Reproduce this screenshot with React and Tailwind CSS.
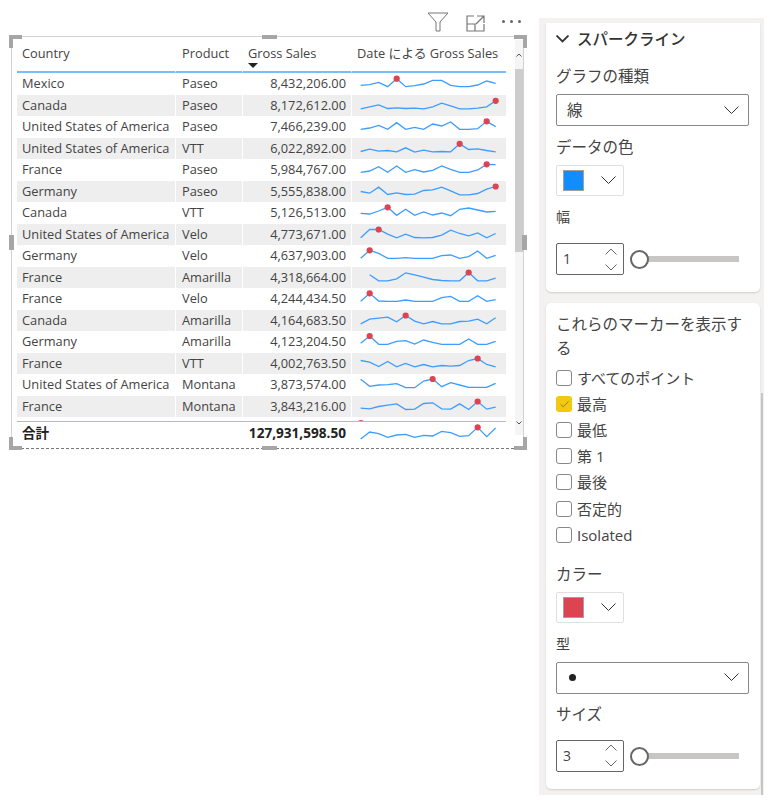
import React from 'react';
import { Check } from 'lucide-react';

// y values are read off the reference at 3x, base is the row top at the same scale
const rows = [
  ['Mexico', 'Paseo', '8,432,206.00', 219, 4, [256,254,247,260,236,260,257,252,241,241,256,260,260,255,243,250]],
  ['Canada', 'Paseo', '8,172,612.00', 283.5, 15, [325,319,313,324,322,324,323,325,319,308,316,325,325,323,319,301]],
  ['United States of America', 'Paseo', '7,466,239.00', 348, 14, [388,384,376,388,368,388,382,388,372,378,366,388,388,386,364,380]],
  ['United States of America', 'VTT', '6,022,892.00', 412.5, 11, [453,446,452,450,454,442,455,449,454,453,454,430,447,445,450,454]],
  ['France', 'Paseo', '5,984,767.00', 477, 14, [517,513,500,517,498,517,509,516,511,498,508,517,517,510,493,494]],
  ['Germany', 'Paseo', '5,555,838.00', 541.5, 15, [573,578,560,582,577,582,581,570,568,560,571,583,583,579,566,558]],
  ['Canada', 'VTT', '5,126,513.00', 606, 3, [640,642,633,622,646,628,646,636,645,639,647,628,624,630,636,634]],
  ['United States of America', 'Velo', '4,773,671.00', -4.5, 2, [37,12,12,26,37,26,36,37,36,29,14,24,31,22,37,24]],
  ['Germany', 'Velo', '4,637,903.00', 60, 1, [100,76,85,100,100,98,100,100,100,92,90,100,95,78,100,91]],
  ['France', 'Amarilla', '4,318,664.00', 124.5, 12, [null,148,166,166,160,142,148,155,162,165,166,166,141,166,166,158]],
  ['France', 'Velo', '4,244,434.50', 189, 1, [229,205,228,229,229,225,229,229,229,218,214,229,229,212,229,224]],
  ['Canada', 'Amarilla', '4,164,683.50', 253.5, 5, [295,281,278,275,289,270,287,295,288,295,295,288,287,281,295,277]],
  ['Germany', 'Amarilla', '4,123,204.50', 318, 1, [355,333,358,358,349,347,357,345,352,358,358,358,342,358,358,349]],
  ['France', 'VTT', '4,002,763.50', 382.5, 13, [405,410,423,408,424,414,424,417,424,420,422,420,405,399,417,424]],
  ['United States of America', 'Montana', '3,873,574.00', 447, 8, [463,484,480,479,476,488,488,468,462,485,473,480,487,487,487,475]],
  ['France', 'Montana', '3,843,216.00', 511.5, 13, [548,550,543,539,535,552,551,534,532,550,551,535,552,528,551,545]],
];

const totalLine = [641,620,625,636,629,627,636,630,632,618,622,633,631,606,634,608];

const markers = ['すべてのポイント', '最高', '最低', '第 1', '最後', '否定的', 'Isolated'];

const Sparkline = ({ base, peak, values }) => {
  const pts = values
    .map((v, i) => (v === null ? null : `${8.67 + i * 9},${(v - base) / 3}`))
    .filter(Boolean)
    .join(' ');
  return (
    <svg width="154" height="21" className="block overflow-visible">
      <polyline points={pts} fill="none" stroke="#3d9dff" strokeWidth="1.3" />
      <circle cx={8.67 + peak * 9} cy={(values[peak] - base) / 3} r="3.1" fill="#dc4452" />
    </svg>
  );
};

const Chevron = ({ w = 15, up = false, width = 1, color = '#333' }) => (
  <svg width={w} height={w / 2 + 1} viewBox={`0 0 ${w} ${w / 2 + 1}`} fill="none" stroke={color} strokeWidth={width} className="block">
    <path d={up ? `M.5 ${w / 2 + .5}L${w / 2} 1l${w / 2 - .5} ${w / 2 - .5}` : `M.5 .5L${w / 2} ${w / 2}l${w / 2 - .5} -${w / 2 - .5}`} />
  </svg>
);

const Handle = ({ className }) => <div className={`absolute bg-[#a6a6a6] ${className}`} />;

const Corner = ({ className, h, v }) => (
  <div className={`absolute w-[13px] h-[13px] ${className}`}>
    <div className={`absolute left-0 w-full h-[4px] bg-[#a6a6a6] ${v}`} />
    <div className={`absolute top-0 h-full w-[4px] bg-[#a6a6a6] ${h}`} />
  </div>
);

const Select = ({ children }) => (
  <div className="h-[32px] w-[193px] border border-[#8a8886] rounded-[2px] flex items-center justify-between pl-[10px] pr-[9px]">
    {children}
    <Chevron />
  </div>
);

const ColorButton = ({ swatch }) => (
  <div className="h-[31px] w-[68px] border border-[#e0e0e0] rounded-[2px] flex items-center pl-[6px] pr-[7px] justify-between">
    <div className={`w-[21px] h-[21px] border border-[#a0a0a0] ${swatch}`} />
    <Chevron />
  </div>
);

const Spinner = ({ value }) => (
  <div className="flex items-center">
    <div className="h-[32px] w-[68px] border border-[#666] rounded-[2px] flex items-center justify-between pl-[6px] pr-[6px]">
      <span className="text-[14px] text-[#444]">{value}</span>
      <div className="flex flex-col gap-[9px]">
        <Chevron w={12} up color="#666" />
        <Chevron w={12} color="#666" />
      </div>
    </div>
    <div className="relative ml-[6px] w-[109px] h-[18px] flex items-center">
      <div className="ml-[9px] w-[100px] h-[6px] bg-[#c8c6c4]" />
      <div className="absolute left-0 top-0 w-[19px] h-[19px] rounded-full border-2 border-[#666] bg-white" />
    </div>
  </div>
);

export default function App() {
  return (
    <div className="w-[770px] h-[801px] bg-white flex overflow-hidden text-[#444] [font-family:'Open_Sans','Noto_Sans_CJK_JP',sans-serif]">
      {/* visual */}
      <div className="w-[539px] shrink-0 pl-[11px]">
        <div className="h-[36px] flex items-start justify-end pr-[18px] pt-[12px] gap-[17px]">
          <svg width="22" height="20" viewBox="0 0 22 20" fill="none" stroke="#777" strokeWidth="1">
            <path d="M1 1h20l-8 9v9h-4v-9z" />
          </svg>
          <svg width="19" height="17" viewBox="0 0 19 17" fill="none" stroke="#777" strokeWidth="1.2" className="mt-[3px]">
            <path d="M8 1H1v15h17V9M1 9h8v7M11 1h7v7M18 1l-8 8" />
          </svg>
          <div className="flex gap-[5px] mt-[8px]">
            <div className="w-[3px] h-[3px] rounded-full bg-[#666]" />
            <div className="w-[3px] h-[3px] rounded-full bg-[#666]" />
            <div className="w-[3px] h-[3px] rounded-full bg-[#666]" />
          </div>
        </div>

        <div className="relative w-[513px] h-[413px] border-l border-t border-r border-[#d2d2d2] border-b border-b-[#777] [border-bottom-style:dashed] flex pl-[5px]">
          <div className="w-[489px] shrink-0 text-[12.8px]">
            <div className="grid grid-cols-[159px_67px_109px_154px] h-[36px]">
              <div className="border-b-2 border-r border-b-[#7cbcf7] border-r-white pl-[5px] pt-[7px]">Country</div>
              <div className="border-b-2 border-r border-b-[#7cbcf7] border-r-white pl-[6px] pt-[7px]">Product</div>
              <div className="relative border-b-2 border-r border-b-[#7cbcf7] border-r-white pl-[5px] pt-[7px]">
                Gross Sales
                <div className="absolute left-[5px] top-[26px] w-0 h-0 border-x-[5px] border-x-transparent border-t-[5px] border-t-[#222]" />
              </div>
              <div className="border-b-2 border-[#7cbcf7] pl-[5px] pt-[7px] whitespace-nowrap">Date による Gross Sales</div>
            </div>

            {rows.map(([country, product, sales, base, peak, values], i) => (
              <div
                key={i}
                className={`grid grid-cols-[159px_67px_109px_154px] h-[21.5px] leading-[21.5px] ${i % 2 === 1 ? 'bg-[#eeeeee]' : 'bg-white'}`}
              >
                <div className="border-r border-white pl-[5px] whitespace-nowrap">{country}</div>
                <div className="border-r border-white pl-[6px]">{product}</div>
                <div className="border-r border-white pr-[5px] text-right">{sales}</div>
                <Sparkline base={base} peak={peak} values={values} />
              </div>
            ))}

            {/* next row just showing under the total */}
            <div className="h-[3.7px] overflow-hidden pl-[335px]">
              <svg width="12" height="6" className="block">
                <circle cx="9" cy="6" r="3.1" fill="#dc4452" />
              </svg>
            </div>
            <div className="h-[1.3px] bg-[#8cc4f5]" />
            <div className="grid grid-cols-[159px_67px_109px_154px] h-[22px] leading-[21px] font-bold text-[13.6px] text-[#222]">
              <div className="pl-[5px]">合計</div>
              <div />
              <div className="pr-[6px] text-right whitespace-nowrap justify-self-end">127,931,598.50</div>
              <Sparkline base={590} peak={13} values={totalLine} />
            </div>
          </div>

          {/* scrollbar */}
          <div className="ml-[9px] mt-[3px] w-[8px] h-[395px] bg-[#f5f5f5] flex flex-col">
            <div className="h-[29px] flex items-center justify-center">
              <Chevron w={6} up color="#555" />
            </div>
            <div className="h-[183px] bg-[#cdcdcd]" />
            <div className="mt-auto h-[24px] flex items-center justify-center">
              <Chevron w={6} color="#555" />
            </div>
          </div>

          <Corner className="-left-[3px] -top-[2px]" h="left-0" v="top-0" />
          <Corner className="-right-[4px] -top-[2px]" h="right-0" v="top-0" />
          <Corner className="-left-[3px] -bottom-[2px]" h="left-0" v="bottom-0" />
          <Corner className="-right-[4px] -bottom-[2px]" h="right-0" v="bottom-0" />
          <Handle className="left-[250px] -top-[2px] w-[15px] h-[4px]" />
          <Handle className="left-[250px] -bottom-[2px] w-[15px] h-[4px]" />
          <Handle className="-left-[3px] top-[198px] w-[5px] h-[15px]" />
          <Handle className="-right-[4px] top-[198px] w-[5px] h-[15px]" />
        </div>
      </div>

      {/* format pane */}
      <div className="relative mt-[18px] w-[225px] h-[777px] bg-[#f3f2f1] pl-[7px] pt-[5px] text-[15.5px] leading-[24px]">
        <div className="w-[214px] h-[269px] bg-white rounded-b-[5px] shadow-[0_1px_2px_rgba(0,0,0,0.15)] pl-[10px]">
          <div className="flex items-center gap-[8px] pt-[4px] font-medium text-[#333]">
            <Chevron w={13} width={1.8} />
            <span>スパークライン</span>
          </div>
          <div className="mt-[13px] h-[24px]">グラフの種類</div>
          <div className="mt-[6px]">
            <Select><span>線</span></Select>
          </div>
          <div className="mt-[9px] h-[24px]">データの色</div>
          <div className="mt-[6px]"><ColorButton swatch="bg-[#118dff]" /></div>
          <div className="mt-[9px] h-[24px] text-[14px]">幅</div>
          <div className="mt-[14px]"><Spinner value="1" /></div>
        </div>

        <div className="mt-[11px] w-[214px] h-[486px] bg-white rounded-[5px] shadow-[0_1px_2px_rgba(0,0,0,0.15)] pl-[10px] pt-[9px]">
          <div className="w-[196px]">これらのマーカーを表示する</div>
          <div className="mt-[5px] flex flex-col">
            {markers.map((m, i) => (
              <div key={m} className="h-[26.1px] flex items-center gap-[5px]">
                {i === 1 ? (
                  <div className="w-[16px] h-[16px] rounded-[3px] bg-[#f2c811] flex items-center justify-center">
                    <Check size={11} strokeWidth={1.2} className="text-[#444]" />
                  </div>
                ) : (
                  <div className="w-[16px] h-[16px] rounded-[3px] border border-[#8a8886]" />
                )}
                <span className="text-[15px]">{m}</span>
              </div>
            ))}
          </div>
          <div className="mt-[14px] h-[24px]">カラー</div>
          <div className="mt-[6px]"><ColorButton swatch="bg-[#dc4452]" /></div>
          <div className="mt-[9px] h-[24px] text-[14px]">型</div>
          <div className="mt-[6px]">
            <Select>
              <div className="ml-[2px] w-[7px] h-[7px] rounded-full bg-[#222]" />
            </Select>
          </div>
          <div className="mt-[8px] h-[24px]">サイズ</div>
          <div className="mt-[14px]"><Spinner value="3" /></div>
        </div>

        <div className="absolute right-[1px] top-[375px] bottom-0 w-[2px] bg-[#c8c6c4]" />
      </div>
    </div>
  );
}
